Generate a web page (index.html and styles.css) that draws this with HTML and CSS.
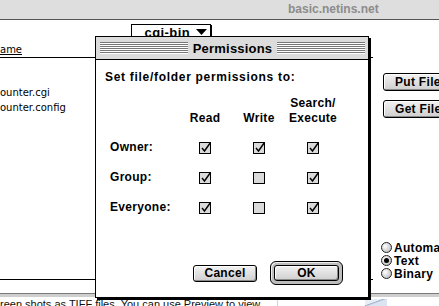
FILE: index.html
```html
<!DOCTYPE html>
<html lang="en">
<head>
  <meta charset="UTF-8" />
  <title>Fetch - basic.netins.net</title>
  <link rel="stylesheet" href="styles.css">
</head>
<body>
  <div class="fetch">
    <div class="fetch-title">basic.netins.net</div>
    <div class="fetch-body">
      <div class="files">
        <div class="popup-row">
          <div class="popup">cgi-bin <svg width="11" height="6" viewBox="0 0 11 6"><path d="M0 0h11L5.5 6z" fill="#000"/></svg></div>
        </div>
        <div class="list-head"><span class="col-name">ame</span></div>
        <ul class="list">
          <li>ounter.cgi</li>
          <li>ounter.config</li>
        </ul>
        <div class="list-foot"></div>
      </div>
      <div class="side">
        <button class="btn side-btn">Put File</button>
        <button class="btn side-btn">Get File</button>
        <div class="modes">
          <label class="mode"><span class="radio"></span>Automatic</label>
          <label class="mode"><span class="radio on"></span>Text</label>
          <label class="mode"><span class="radio"></span>Binary</label>
        </div>
      </div>
    </div>
    <div class="fetch-foot"></div>
  </div>

  <div class="doc">
    <p class="doc-text">reen shots as TIFF files. You can use Preview to view</p>
    <span class="doc-gap"></span>
    <span class="doc-thumb"></span>
  </div>

  <div class="dialog">
    <div class="dlg-title">
      <span class="stripes"></span>
      <span class="dlg-name">Permissions</span>
      <span class="stripes"></span>
    </div>
    <div class="dlg-body">
      <p class="prompt">Set file/folder permissions to:</p>
      <div class="perms">
        <span></span>
        <span class="col-head">Read</span>
        <span class="col-head">Write</span>
        <span class="col-head">Search/<br>Execute</span>

        <span class="who">Owner:</span>
        <span class="cell"><svg class="check" viewBox="0 0 13 13"><rect x="0.5" y="1.5" width="11" height="11" class="box"/><path d="M3 7l2.5 3L11.5 1.5" class="tick"/></svg></span>
        <span class="cell"><svg class="check" viewBox="0 0 13 13"><rect x="0.5" y="1.5" width="11" height="11" class="box"/><path d="M3 7l2.5 3L11.5 1.5" class="tick"/></svg></span>
        <span class="cell"><svg class="check" viewBox="0 0 13 13"><rect x="0.5" y="1.5" width="11" height="11" class="box"/><path d="M3 7l2.5 3L11.5 1.5" class="tick"/></svg></span>

        <span class="who">Group:</span>
        <span class="cell"><svg class="check" viewBox="0 0 13 13"><rect x="0.5" y="1.5" width="11" height="11" class="box"/><path d="M3 7l2.5 3L11.5 1.5" class="tick"/></svg></span>
        <span class="cell"><svg class="check" viewBox="0 0 13 13"><rect x="0.5" y="1.5" width="11" height="11" class="box"/></svg></span>
        <span class="cell"><svg class="check" viewBox="0 0 13 13"><rect x="0.5" y="1.5" width="11" height="11" class="box"/><path d="M3 7l2.5 3L11.5 1.5" class="tick"/></svg></span>

        <span class="who">Everyone:</span>
        <span class="cell"><svg class="check" viewBox="0 0 13 13"><rect x="0.5" y="1.5" width="11" height="11" class="box"/><path d="M3 7l2.5 3L11.5 1.5" class="tick"/></svg></span>
        <span class="cell"><svg class="check" viewBox="0 0 13 13"><rect x="0.5" y="1.5" width="11" height="11" class="box"/></svg></span>
        <span class="cell"><svg class="check" viewBox="0 0 13 13"><rect x="0.5" y="1.5" width="11" height="11" class="box"/><path d="M3 7l2.5 3L11.5 1.5" class="tick"/></svg></span>
      </div>
      <div class="dlg-buttons">
        <button class="btn cancel">Cancel</button>
        <span class="default-ring"><button class="btn ok">OK</button></span>
      </div>
    </div>
  </div>
</body>
</html>
```

FILE: styles.css
```css
* { box-sizing: border-box; margin:0; padding:0; }
body {
  width:439px; height:306px; overflow:hidden;
  position:relative; background:#fff; color:#000;
  font-family: "Liberation Sans", Arial, sans-serif;
}

/* background Fetch window */
.fetch { height:297px; display:flex; flex-direction:column; }
.fetch-title {
  height:20px; background:#dedede;
  border-bottom:1px solid #555;
  color:#8c8c8c; font-weight:bold; font-size:12px;
  line-height:19px; padding-left:288px; white-space:nowrap;
}
.fetch-body { flex:1; display:flex; min-height:0; }
.files { flex:none; width:373px; display:flex; flex-direction:column; }
.popup-row { padding:4px 0 0 131px; height:20px; }
.popup {
  width:80px; height:16px; background:#fff;
  border:1px solid #000; box-shadow:1px 1px 0 #000;
  display:flex; align-items:center; justify-content:flex-end; gap:6px;
  padding-right:3px;
  font-weight:bold; font-size:13px; letter-spacing:0.4px;
}
.list-head {
  height:18px; border-bottom:1px solid #000;
  padding-top:4px;
  font-family:"DejaVu Sans", sans-serif; font-size:10px; line-height:12px;
}
.col-name { text-decoration:underline; }
.list {
  flex:1; list-style:none; padding-top:27px;
  font-family:"DejaVu Sans", sans-serif; font-size:10px; line-height:15px;
}
.list-foot { height:14px; border-top:1px solid #000; }

.side { flex:1; min-width:0; padding:53px 0 0 10px; display:flex; flex-direction:column; align-items:flex-start; white-space:nowrap; }

/* platinum push button */
.btn {
  font-family:inherit; font-weight:bold; font-size:12px; letter-spacing:0.3px;
  background:linear-gradient(#f2f2f2, #cfcfcf);
  border:1px solid #000; border-radius:3px;
  box-shadow:inset 1px 1px 0 #fff, inset -1px -1px 0 #8a8a8a;
  color:#000;
}
.side-btn { flex:none; width:64px; height:18px; padding-left:11px; text-align:left; }
.side-btn + .side-btn { margin-top:9px; }

.modes { margin-top:123px; margin-left:-2px; display:flex; flex-direction:column; }
.mode {
  height:13px; display:flex; align-items:center; gap:2px;
  font-weight:bold; font-size:12px; letter-spacing:0.3px;
}
.radio {
  flex:none; width:11px; height:11px; border-radius:50%;
  border:1px solid #222;
  background:radial-gradient(circle at 35% 35%, #fff, #c8c8c8 70%);
  display:flex; align-items:center; justify-content:center;
}
.radio.on::after {
  content:""; width:5px; height:5px; border-radius:50%; background:#000;
}

.fetch-foot { height:4px; background:#cfcfcf; border-top:1px solid #7a7a7a; }

/* document window peeking below */
.doc { height:9px; display:flex; }
.doc-text {
  width:278px; border-right:1px solid #d4d4d4;
  font-size:11px; line-height:12px; padding-top:1px; white-space:nowrap; overflow:hidden;
  color:#111;
}
.doc-gap { width:87px; }
.doc-thumb {
  width:22px; height:7px; margin-top:2px;
  background:linear-gradient(160deg, #e8eef6 40%, #9fb2cc 45%, #dbe4f0 55%);
}

/* Permissions dialog */
.dialog {
  position:absolute; left:95px; top:36px;
  width:274px; height:262px;
  background:#fff; border:1px solid #000;
  box-shadow:2px 2px 0 #000;
  display:flex; flex-direction:column;
}
.dlg-title {
  height:23px; background:#dcdcdc;
  border-bottom:1px solid #000;
  display:flex; align-items:center; padding:0 3px 0 4px;
}
.stripes {
  flex:1; height:12px;
  background:repeating-linear-gradient(to bottom, #777 0 1px, #fff 1px 2px);
}
.dlg-name { padding:0 5px; font-weight:bold; font-size:13px; letter-spacing:0.2px; }

.dlg-body { flex:1; display:flex; flex-direction:column; padding:9px 25px 12px 9px; }
.prompt { font-weight:bold; font-size:12px; line-height:16px; letter-spacing:0.7px; }

.perms {
  margin:11px 0 0 5px;
  display:grid; grid-template-columns:68px 54px 54px 54px;
  grid-template-rows:36px 30px 30px 30px;
  font-weight:bold; font-size:12px; letter-spacing:0.3px;
}
.col-head { text-align:center; line-height:15px; align-self:start; display:flex; align-items:flex-end; justify-content:center; height:30px; }
.who { display:flex; align-items:center; }
.cell { display:flex; align-items:center; justify-content:center; }
.check { width:13px; height:13px; overflow:visible; }
.check .box { fill:#dadada; stroke:#000; stroke-width:1; }
.check .tick { fill:none; stroke:#000; stroke-width:1.4; }

.dlg-buttons { margin-top:auto; display:flex; justify-content:flex-end; align-items:center; gap:13px; }
.cancel { width:64px; height:17px; }
.default-ring {
  width:73px; height:24px; padding:3px;
  border:1px solid #000; border-radius:6px;
  background:#bdbdbd; box-shadow:inset 1px 1px 0 #eee;
  display:flex;
}
.ok { flex:1; }
```
